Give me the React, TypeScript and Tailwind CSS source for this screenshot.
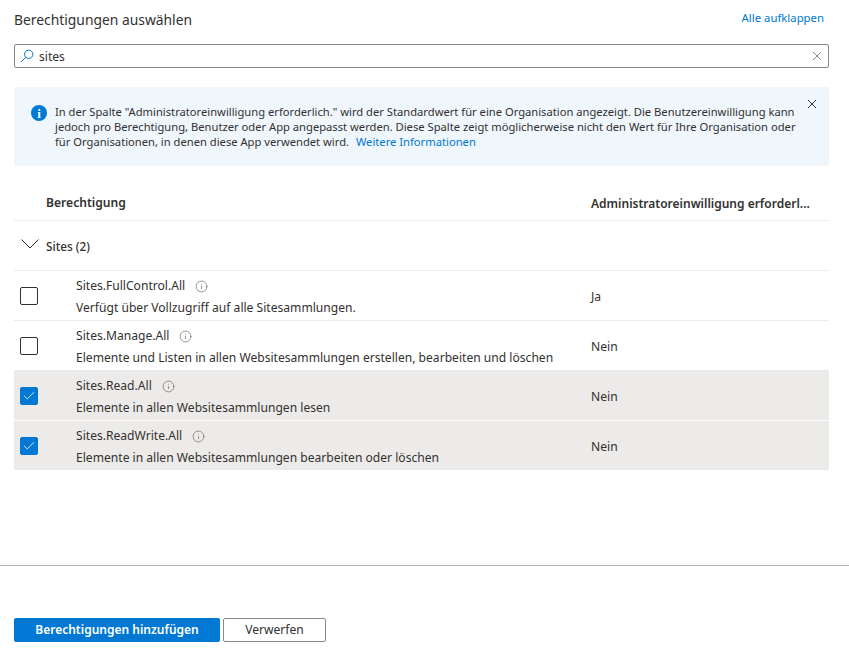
import { Check, Info } from 'lucide-react';

const rows = [
  { name: 'Sites.FullControl.All', desc: 'Verfügt über Vollzugriff auf alle Sitesammlungen.', admin: 'Ja', checked: false },
  { name: 'Sites.Manage.All', desc: 'Elemente und Listen in allen Websitesammlungen erstellen, bearbeiten und löschen', admin: 'Nein', checked: false },
  { name: 'Sites.Read.All', desc: 'Elemente in allen Websitesammlungen lesen', admin: 'Nein', checked: true },
  { name: 'Sites.ReadWrite.All', desc: 'Elemente in allen Websitesammlungen bearbeiten oder löschen', admin: 'Nein', checked: true },
];

const Cross = ({ className }: { className: string }) => (
  <svg viewBox="0 0 10 10" className={className} fill="none" stroke="currentColor" strokeWidth="1">
    <path d="M1 1l8 8M9 1l-8 8" />
  </svg>
);

const App = () => {
  return (
    <div className="w-[849px] h-[649px] bg-white overflow-hidden flex flex-col text-[12.1px] text-[#323130] font-['Noto_Sans','Open_Sans',sans-serif]">
      <div className="pl-[14px] pr-[20px] flex-1">
        <div className="flex justify-between h-[44px] pt-[9px]">
          <span className="text-[13.85px] leading-[22px]">Berechtigungen auswählen</span>
          <a className="text-[11.35px] leading-[18px] text-[#0078d4] mr-[5px]">Alle aufklappen</a>
        </div>

        <div className="h-[24px] border border-[#8a8886] rounded-[2px] flex items-center pl-[5px] pr-[6px]">
          <svg viewBox="0 0 14 14" className="w-[14px] h-[14px] text-[#0078d4]" fill="none" stroke="currentColor" strokeWidth="1">
            <circle cx="8.7" cy="5.3" r="4.2" />
            <path d="M5.6 8.4L1 13" />
          </svg>
          <span className="ml-[5px] flex-1 leading-[22px] pt-[1px]">sites</span>
          <Cross className="w-[10px] h-[10px] text-[#8a8886]" />
        </div>

        <div className="mt-[19px] h-[79px] bg-[#eff6fc] rounded-[2px] flex pl-[17px] pr-[12px] pt-[17px] leading-[15px] text-[11.2px]">
          <div className="w-[16px] h-[16px] rounded-full bg-[#0078d4] text-white flex items-center justify-center shrink-0 mt-[1px]">
            <span className="text-[13px] leading-none font-bold font-['Liberation_Serif',serif]">i</span>
          </div>
          <p className="ml-[8px] w-[752px] shrink-0">
            In der Spalte "Administratoreinwilligung erforderlich." wird der Standardwert für eine Organisation angezeigt. Die Benutzereinwilligung kann jedoch pro Berechtigung, Benutzer oder App angepasst werden. Diese Spalte zeigt möglicherweise nicht den Wert für Ihre Organisation oder für Organisationen, in denen diese App verwendet wird.{' '}
            <a className="ml-[4px] text-[#0078d4]">Weitere Informationen</a>
          </p>
          <Cross className="ml-auto w-[10px] h-[10px] -mt-[5px] shrink-0 text-[#323130]" />
        </div>

        <div className="mt-[19px] h-[36px] flex items-center border-b border-[#edebe9] font-semibold pt-[2px]">
          <span className="ml-[32px] w-[545px] shrink-0">Berechtigung</span>
          <span className="whitespace-nowrap text-[12px]">Administratoreinwilligung erforderl...</span>
        </div>

        <div className="h-[50px] flex items-center border-b border-[#edebe9] font-medium">
          <svg viewBox="0 0 18 10" className="ml-[7px] w-[18px] h-[10px] -mt-[3px] text-[#323130]" fill="none" stroke="currentColor" strokeWidth="1">
            <path d="M0.5 0.5L9 9L17.5 0.5" />
          </svg>
          <span className="ml-[7px] text-[11.8px] pt-[2px]">Sites (2)</span>
        </div>

        {rows.map((row) => (
          <div
            key={row.name}
            className={`h-[50px] flex items-center border-b ${row.checked ? 'bg-[#edebe9] border-white' : 'border-[#edebe9]'}`}
          >
            <div
              className={`ml-[6px] w-[18px] h-[18px] rounded-[2px] border flex items-center justify-center shrink-0 ${
                row.checked ? 'bg-[#0078d4] border-[#0078d4]' : 'border-[#323130]'
              }`}
            >
              {row.checked && <Check className="w-[14px] h-[14px] text-white" strokeWidth={1.4} />}
            </div>
            <div className="ml-[38px] w-[515px] shrink-0">
              <div className="flex items-center leading-[18px] h-[24px] pt-[3px]">
                <span>{row.name}</span>
                <Info className="ml-[10px] w-[13px] h-[13px] text-[#605e5c]" strokeWidth={1.2} />
              </div>
              <div className="leading-[18px] h-[20px] mt-[2px] whitespace-nowrap">{row.desc}</div>
            </div>
            <span className="pt-[4px]">{row.admin}</span>
          </div>
        ))}
      </div>

      <div className="border-t border-[#b3b0ad] h-[84px] px-[14px] pt-[52px] flex items-start gap-[3px]">
        <button className="w-[206px] h-[24px] bg-[#0078d4] text-white text-[12px] font-semibold rounded-[2px] leading-none">
          Berechtigungen hinzufügen
        </button>
        <button className="w-[103px] h-[24px] border border-[#8a8886] rounded-[2px] leading-none">
          Verwerfen
        </button>
      </div>
    </div>
  );
};

export default App;
